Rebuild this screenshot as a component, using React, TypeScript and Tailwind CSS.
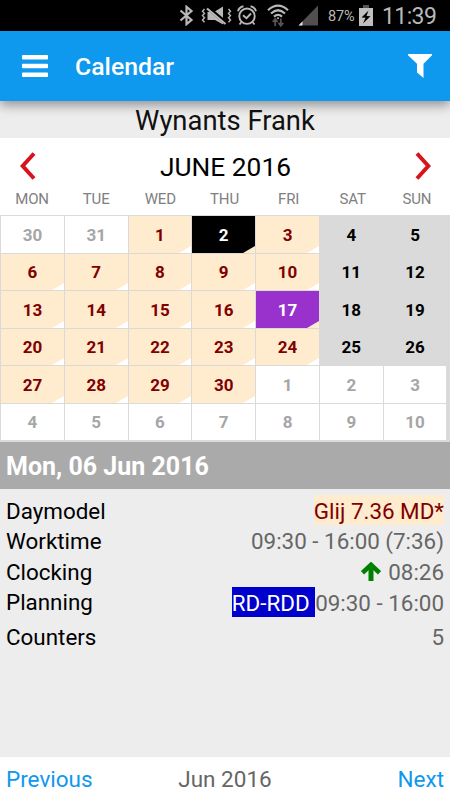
import React from 'react';

const weekdays = ['MON', 'TUE', 'WED', 'THU', 'FRI', 'SAT', 'SUN'];

const days = [
  30, 31, ...Array.from({ length: 30 }, (_, i) => i + 1),
  ...Array.from({ length: 10 }, (_, i) => i + 1),
];

type DayKind = 'outside' | 'weekend' | 'work' | 'today' | 'leave';

const kindStyles: Record<DayKind, string> = {
  outside: 'bg-white text-[#a6a6a6]',
  weekend: 'bg-[#dadada] text-black',
  work: 'bg-[#ffebcd] text-[#800000]',
  today: 'bg-black text-white',
  leave: 'bg-[#9932cc] text-white',
};

const getKind = (index: number): DayKind => {
  if (index < 2 || index > 31) return 'outside';
  if (index % 7 > 4) return 'weekend';
  if (days[index] === 2) return 'today';
  if (days[index] === 17) return 'leave';
  return 'work';
};

const StatusBar: React.FC = () => (
  <div className="h-[31px] shrink-0 bg-black text-[#b8b8b8] flex items-center pl-[179px]">
    <svg width="15" height="21" viewBox="0 0 15 21" fill="none" stroke="currentColor" strokeWidth="2.2">
      <path d="M1.5 5.5L12.5 15L7.5 19.2V1.8L12.5 6L1.5 15.5" />
    </svg>
    <svg className="ml-[7px]" width="31" height="20" viewBox="0 0 31 20">
      <path d="M3.5 3L1.5 5.2L3.5 7.4L1.5 9.6L3.5 11.8L1.5 14L3.5 16.2M27.5 3L29.5 5.2L27.5 7.4L29.5 9.6L27.5 11.8L29.5 14L27.5 16.2" fill="none" stroke="currentColor" strokeWidth="1.4" />
      <path d="M6.5 6H13L22 0.5V18.5L14 14H6.5Z" fill="currentColor" />
      <path d="M6 1L25 17" stroke="#000" strokeWidth="4" />
      <path d="M6 2.5L24.5 18" stroke="currentColor" strokeWidth="2.2" />
    </svg>
    <svg className="ml-[5px]" width="20" height="21" viewBox="0 0 20 21" fill="none" stroke="currentColor" strokeWidth="1.9">
      <circle cx="10" cy="11.2" r="7.7" />
      <path d="M6 10.2L9.5 13.2L14 8.5M1 6.2Q2 2.3 6.5 1.3M19 6.2Q18 2.3 13.5 1.3M4.5 17L2.5 19.5M15.5 17L17.5 19.5" />
    </svg>
    <svg className="ml-[10px]" width="22" height="23" viewBox="0 0 22 23" fill="none" stroke="currentColor" strokeWidth="2.2">
      <path d="M1 6.2Q11-2.8 21 6.2M4 9.5Q11 3 18 9.5M7 12.6Q11 9 15 12.6" />
      <circle cx="11" cy="14.3" r="1" fill="currentColor" stroke="none" />
      <path d="M8.2 22V15.5M5.8 18L8.2 15L10.6 18M13.8 14.5V21M11.4 18.7L13.8 21.8L16.2 18.7" stroke="#555" strokeWidth="1.8" />
    </svg>
    <svg className="ml-[9px]" width="21" height="21" viewBox="0 0 21 21">
      <path d="M0.5 20.5L20 0.5V20.5Z" fill="#505050" />
      <path d="M0.5 20.5L4.5 16.3V20.5Z" fill="#e0e0e0" />
    </svg>
    <span className="ml-[9px] w-[31px] text-[14.5px] tracking-[-0.2px] leading-none whitespace-nowrap mt-[3px]">87%</span>
    <svg width="14" height="21" viewBox="0 0 14 21">
      <path d="M4 0H10V3H4Z" fill="#555" />
      <path d="M0 3H14V21H0Z" fill="#c0c0c0" />
      <path d="M9.5 5.5L2.5 12.5L6.5 12.8L4 18.5L11.5 11.2L7.5 11Z" fill="#000" />
    </svg>
    <span className="ml-[9px] text-[23px] tracking-[-0.6px] leading-none whitespace-nowrap mt-[2px]">11:39</span>
  </div>
);

const Header: React.FC = () => (
  <header className="relative z-10 h-[70px] shrink-0 bg-[#0e98ee] flex items-center pl-[22px] pr-[18px] shadow-[0_4px_11px_rgba(0,0,0,0.4)]">
    <svg width="26" height="22" viewBox="0 0 26 22" fill="#fff">
      <rect width="26" height="4.6" rx="0.8" />
      <rect y="8.7" width="26" height="4.6" rx="0.8" />
      <rect y="17.4" width="26" height="4.6" rx="0.8" />
    </svg>
    <h1 className="ml-[27px] flex-1 text-[24.8px] leading-[30px] font-medium text-white mt-[2px]">Calendar</h1>
    <svg width="24" height="24" viewBox="0 0 24 24" fill="#fff">
      <path d="M0 0H24V1.3L15.5 9.8V24L9 18.5V9.8L0 1.3Z" />
    </svg>
  </header>
);

const DayCell: React.FC<{ day: number; kind: DayKind }> = ({ day, kind }) => (
  <div className={`relative flex items-center justify-center text-[17px] leading-none font-bold pt-[2px] ${kindStyles[kind]}`}>
    {day}
    {kind !== 'outside' && kind !== 'weekend' && (
      <svg className="absolute right-0 bottom-0" width="12" height="7" viewBox="0 0 12 7">
        <path d="M12 0V7H0Z" fill={kind === 'work' ? '#fff' : '#ffebcd'} />
      </svg>
    )}
  </div>
);

const DetailRow: React.FC<{ label: string; children: React.ReactNode }> = ({ label, children }) => (
  <div className="h-[30.5px] flex items-center justify-between whitespace-nowrap">
    <span className="text-black pt-px">{label}</span>
    <span className="flex items-center leading-[27px]">{children}</span>
  </div>
);

const App: React.FC = () => (
  <div className="w-[450px] h-[800px] flex flex-col overflow-hidden bg-[#ededed] font-['Roboto',sans-serif]">
    <StatusBar />
    <Header />

    <div className="h-[37px] shrink-0 text-center text-[27.4px] leading-[40px] text-[#111]">Wynants Frank</div>

    {/* Month navigation */}
    <div className="h-[77px] shrink-0 bg-white flex flex-col">
      <div className="h-[50px] flex items-center justify-between pl-[20px] pr-[19px] pt-[5px]">
        <svg width="16" height="28" viewBox="0 0 16 28" fill="none" stroke="#d7141e" strokeWidth="4">
          <path d="M14 1.5L2.7 14L14 26.5" />
        </svg>
        <span className="text-[26.3px] leading-[30px] text-black pt-[2px]">JUNE 2016</span>
        <svg width="16" height="28" viewBox="0 0 16 28" fill="none" stroke="#d7141e" strokeWidth="4">
          <path d="M2 1.5L13.3 14L2 26.5" />
        </svg>
      </div>
      <div className="grid grid-cols-7 pr-px text-center text-[15px] tracking-[-0.1px] leading-[23px] text-[#808080]">
        {weekdays.map((d) => <span key={d}>{d}</span>)}
      </div>
    </div>

    {/* Days */}
    <div className="h-[227px] shrink-0 grid grid-cols-7 grid-rows-6 gap-px bg-[#dadada] pt-px pb-[2px] pl-px pr-[3.5px]">
      {days.map((day, i) => <DayCell key={i} day={day} kind={getKind(i)} />)}
    </div>

    <div className="h-[47px] shrink-0 bg-[#aaaaaa] pl-[6px] text-[25px] leading-[50px] font-bold text-white">
      Mon, 06 Jun 2016
    </div>

    {/* Day details */}
    <div className="flex-1 pt-[6px] px-[6px] text-[22.4px] leading-[30px] text-[#666]">
      <DetailRow label="Daymodel">
        <span className="bg-[#ffebcd] text-[#800000] pt-[3px]">Glij 7.36 MD*</span>
      </DetailRow>
      <DetailRow label="Worktime"><span className="pt-[2px]">09:30 - 16:00 (7:36)</span></DetailRow>
      <DetailRow label="Clocking">
        <svg className="mr-[7px]" width="20" height="19" viewBox="0 0 20 19" fill="none" stroke="#008000">
          <path d="M10 19V4" strokeWidth="5" />
          <path d="M1.5 10.8L10 2.8L18.5 10.8" strokeWidth="4.6" />
        </svg>
        <span className="pt-[3px]">08:26</span>
      </DetailRow>
      <DetailRow label="Planning">
        <span className="bg-[#0000cd] text-white whitespace-pre pt-[3px]">RD-RDD </span>
        <span className="pt-[3px]">09:30 - 16:00</span>
      </DetailRow>
      <div className="pt-[4px]">
        <DetailRow label="Counters"><span className="pt-[3px]">5</span></DetailRow>
      </div>
    </div>

    <footer className="h-[43px] shrink-0 bg-white grid grid-cols-3 px-[6px] text-[22.5px] leading-[45px] text-[#0e98ee]">
      <span>Previous</span>
      <span className="text-center text-[#666]">Jun 2016</span>
      <span className="text-right">Next</span>
    </footer>
  </div>
);

export default App;
